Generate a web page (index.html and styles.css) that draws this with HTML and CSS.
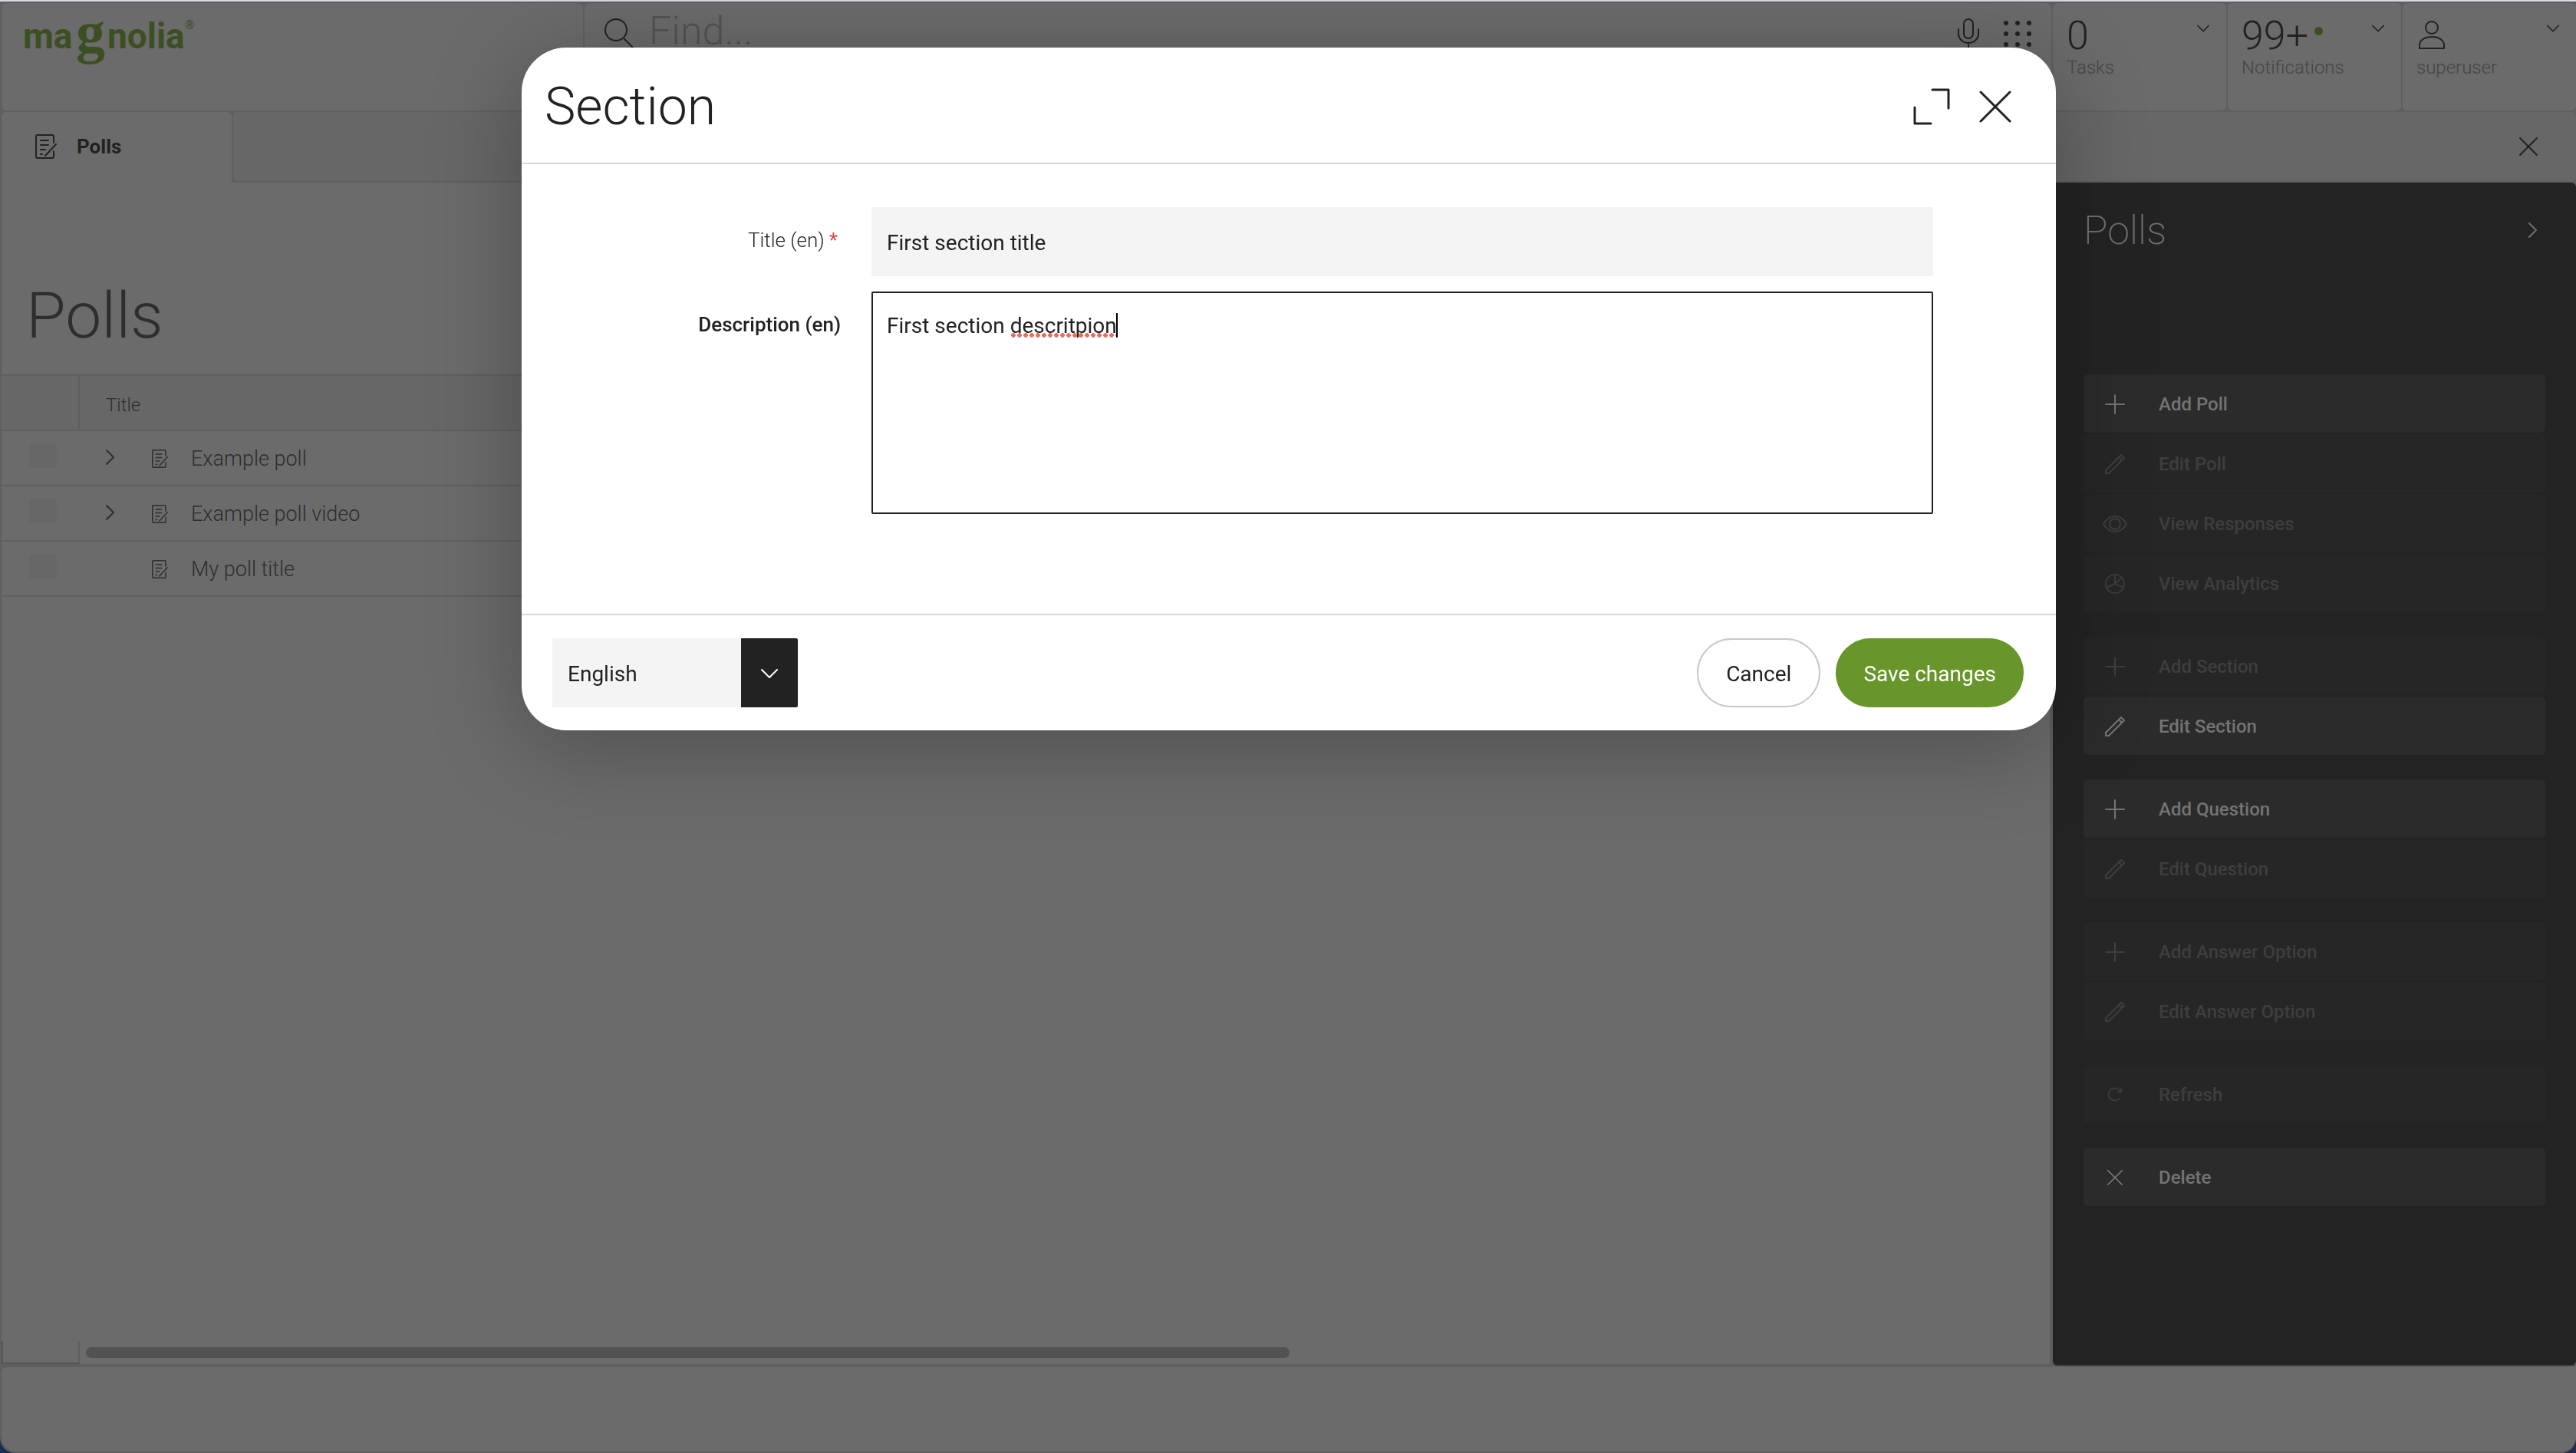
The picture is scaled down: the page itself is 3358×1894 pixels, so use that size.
FILE: index.html
```html
<!DOCTYPE html>
<html lang="en">
<head>
<meta charset="utf-8">
<title>Polls - Magnolia</title>
<link rel="stylesheet" href="styles.css">
</head>
<body>
<svg class="sprite" aria-hidden="true">
  <symbol id="doc" viewBox="0 0 28 32"><path d="M24 11V3a2 2 0 0 0-2-2H3a2 2 0 0 0-2 2v26a2 2 0 0 0 2 2h19a2 2 0 0 0 2-2v-7M7 8h10M7 14h10M7 20h6M7 26h2M27 13 13 28"/></symbol>
  <symbol id="close" viewBox="0 0 24 24"><path d="M1 1l22 22M23 1 1 23"/></symbol>
  <symbol id="down" viewBox="0 0 22 12"><path d="M1 1l10 10L21 1"/></symbol>
  <symbol id="right" viewBox="0 0 12 20"><path d="M1 1l9 9-9 9"/></symbol>
  <symbol id="plus" viewBox="0 0 26 26"><path d="M13 1v24M1 13h24"/></symbol>
  <symbol id="pencil" viewBox="0 0 26 26"><path d="M1 25v-4L19 3l2-2 4 4-2 2L5 25zM18 4l4 4"/></symbol>
  <symbol id="eye" viewBox="0 0 32 24"><path d="M1 12C5 5 10 2 16 2s11 3 15 10c-4 7-9 10-15 10S5 19 1 12z"/><circle cx="16" cy="12" r="7"/></symbol>
  <symbol id="pie" viewBox="0 0 28 28"><circle cx="14" cy="14" r="13"/><path d="M14 1v13l9-8M14 14 3 19M14 14l11 5"/></symbol>
  <symbol id="refresh" viewBox="0 0 22 22"><path d="M17 17a9 9 0 1 1 1-12l2 2M20 2v5h-5"/></symbol>
</svg>

<header class="topbar">
  <div class="cell brand">
    <a href="#" aria-label="magnolia">
      <svg class="logo" width="230" height="68" viewBox="0 0 230 68">
        <text class="logo-sans" x="-2" y="43">ma</text>
        <text class="logo-serif" x="67" y="48">g</text>
        <text class="logo-sans" x="108" y="43">nolia</text>
        <text class="logo-mark" x="209" y="18">®</text>
      </svg>
    </a>
  </div>
  <div class="cell search">
    <svg class="icon" width="38" height="40" viewBox="0 0 38 40"><circle cx="15" cy="15" r="14"/><path d="M26 27l11 11"/></svg>
    <input class="search-input" type="text" placeholder="Find..." aria-label="Find">
    <svg class="icon" width="28" height="44" viewBox="0 0 28 44"><rect x="8" y="1" width="12" height="25" rx="6"/><path d="M1 14v6a13 12 0 0 0 26 0v-6M14 32v10"/></svg>
    <svg class="dots" width="36" height="36" viewBox="0 0 36 36"><circle cx="3" cy="4" r="3"/><circle cx="18" cy="4" r="3"/><circle cx="33" cy="4" r="3"/><circle cx="3" cy="18" r="3"/><circle cx="18" cy="18" r="3"/><circle cx="33" cy="18" r="3"/><circle cx="3" cy="32" r="3"/><circle cx="18" cy="32" r="3"/><circle cx="33" cy="32" r="3"/></svg>
  </div>
  <button class="cell stat" type="button">
    <span class="stat-value">0</span><svg class="icon stat-arrow"><use href="#down"/></svg>
    <span class="stat-name">Tasks</span>
  </button>
  <button class="cell stat" type="button">
    <span class="stat-value">99+<i class="unread"></i></span><svg class="icon stat-arrow"><use href="#down"/></svg>
    <span class="stat-name">Notifications</span>
  </button>
  <button class="cell stat" type="button">
    <span class="stat-value"><svg class="icon user-icon" width="36" height="38" viewBox="0 0 36 38"><ellipse cx="18" cy="9" rx="8" ry="8"/><path d="M2 36v-4c0-6 6-11 16-11s16 5 16 11v4z"/></svg></span><svg class="icon stat-arrow"><use href="#down"/></svg>
    <span class="stat-name">superuser</span>
  </button>
</header>

<nav class="tabs">
  <a class="tab" href="#"><svg class="icon" width="28" height="32"><use href="#doc"/></svg>Polls</a>
  <div class="tab-rest"><button class="plain" type="button" aria-label="Close app"><svg class="icon" width="24" height="24"><use href="#close"/></svg></button></div>
</nav>

<main class="main">
  <section class="browser">
    <h1 class="title">Polls</h1>
    <table class="polls">
      <colgroup><col class="col-check"><col></colgroup>
      <thead><tr><th></th><th>Title</th></tr></thead>
      <tbody>
        <tr><td><input class="check" type="checkbox" aria-label="Example poll"></td><td><div class="node"><svg class="icon caret-icon"><use href="#right"/></svg><svg class="icon node-icon"><use href="#doc"/></svg>Example poll</div></td></tr>
        <tr><td><input class="check" type="checkbox" aria-label="Example poll video"></td><td><div class="node"><svg class="icon caret-icon"><use href="#right"/></svg><svg class="icon node-icon"><use href="#doc"/></svg>Example poll video</div></td></tr>
        <tr><td><input class="check" type="checkbox" aria-label="My poll title"></td><td><div class="node"><span class="caret-icon"></span><svg class="icon node-icon"><use href="#doc"/></svg>My poll title</div></td></tr>
      </tbody>
    </table>
    <div class="scroll-row"><div class="scroll-corner"></div><div class="scroll-track"><div class="scroll-thumb"></div></div></div>
  </section>

  <aside class="actions">
    <div class="actions-head"><h2 class="actions-title">Polls</h2><button class="plain" type="button" aria-label="Collapse"><svg class="icon caret-icon"><use href="#right"/></svg></button></div>
    <div class="group">
      <button class="action" type="button"><svg class="icon"><use href="#plus"/></svg>Add Poll</button>
      <button class="action" type="button" disabled><svg class="icon"><use href="#pencil"/></svg>Edit Poll</button>
      <button class="action" type="button" disabled><svg class="icon wide-icon"><use href="#eye"/></svg>View Responses</button>
      <button class="action" type="button" disabled><svg class="icon"><use href="#pie"/></svg>View Analytics</button>
    </div>
    <div class="group">
      <button class="action" type="button" disabled><svg class="icon"><use href="#plus"/></svg>Add Section</button>
      <button class="action" type="button"><svg class="icon"><use href="#pencil"/></svg>Edit Section</button>
    </div>
    <div class="group">
      <button class="action" type="button"><svg class="icon"><use href="#plus"/></svg>Add Question</button>
      <button class="action" type="button" disabled><svg class="icon"><use href="#pencil"/></svg>Edit Question</button>
    </div>
    <div class="group">
      <button class="action" type="button" disabled><svg class="icon"><use href="#plus"/></svg>Add Answer Option</button>
      <button class="action" type="button" disabled><svg class="icon"><use href="#pencil"/></svg>Edit Answer Option</button>
    </div>
    <div class="group">
      <button class="action" type="button" disabled><svg class="icon small-icon"><use href="#refresh"/></svg>Refresh</button>
    </div>
    <div class="group">
      <button class="action" type="button"><svg class="icon small-icon"><use href="#close"/></svg>Delete</button>
    </div>
  </aside>
</main>
<footer class="status"></footer>

<div class="overlay">
  <form class="dialog" role="dialog" aria-labelledby="dialog-title">
    <header class="dialog-head">
      <h2 class="dialog-title" id="dialog-title">Section</h2>
      <button class="plain" type="button" aria-label="Maximize"><svg class="icon thick" width="48" height="48" viewBox="0 0 48 48"><path d="M25 2h21v24M2 25v21h21"/></svg></button>
      <button class="plain" type="button" aria-label="Close"><svg class="icon thick" width="42" height="42" viewBox="0 0 42 42"><path d="M2 2l38 38M40 2 2 40"/></svg></button>
    </header>
    <div class="dialog-body">
      <label class="label" for="f-title">Title (en)<span class="required">*</span></label>
      <input class="field" id="f-title" type="text" value="First section title">
      <label class="label label-active" for="f-desc">Description (en)</label>
      <div class="area-wrap">
        <textarea class="field area" id="f-desc" spellcheck="false">First section descritpion</textarea>
        <span class="misspelt"></span><span class="caret"></span>
      </div>
    </div>
    <footer class="dialog-foot">
      <div class="select-wrap">
        <select class="select" aria-label="Language"><option>English</option></select>
        <svg class="icon select-arrow" width="22" height="12"><use href="#down"/></svg>
      </div>
      <button class="btn btn-plain" type="button">Cancel</button>
      <button class="btn btn-primary" type="submit">Save changes</button>
    </footer>
  </form>
</div>
</body>
</html>
```
FILE: styles.css
```css
:root {
  --page: #6b6b6b;
  --page-alt: #676767;
  --line: #5f5f5f;
  --ink: #222;
  --ink-soft: #2e2e2e;
  --panel: #232323;
}

* { box-sizing: border-box; }

html { background: linear-gradient(90deg, #16304f, #2b2a4d); }

body {
  margin: 0;
  min-height: 100vh;
  display: flex;
  flex-direction: column;
  background: var(--line);
  border-top: 2px solid #d8d9e0;
  border-radius: 0 0 20px 20px;
  padding: 2px 0 0 2px;
  font-family: Roboto, "Liberation Sans", sans-serif;
  font-size: 28px;
  color: var(--ink);
}

button, input, select, textarea { font: inherit; color: inherit; border-radius: 0; }
a { color: inherit; text-decoration: none; }
.sprite { display: none; }

.icon { fill: none; stroke: currentColor; stroke-width: 2; stroke-linecap: round; stroke-linejoin: round; flex: none; }
.thick { stroke-width: 3; }
.plain { border: 0; padding: 0; background: none; display: flex; }

/* Top bar */
.topbar {
  display: grid;
  grid-template-columns: 758px 1fr 226px 226px 226px;
  gap: 2px;
  height: 140px;
}
.cell { background: var(--page); border: 0; border-radius: 6px; }
.brand { padding: 16px 30px; }
.logo { display: block; overflow: visible; fill: #3c4f22; }
.logo-sans { font: 700 46px Roboto, sans-serif; }
.logo-serif { font: 700 76px "Liberation Serif", serif; }
.logo-mark { font: 500 16px Roboto, sans-serif; }

.search { display: flex; align-items: flex-start; padding: 16px 26px 0 26px; }
.search-input {
  flex: 1;
  min-width: 0;
  height: 60px;
  margin: -10px 0 0 20px;
  padding: 0;
  border: 0;
  background: none;
  font-size: 52px;
  font-weight: 300;
}
.search-input::placeholder { color: #535353; opacity: 1; }
.dots { fill: var(--ink); margin: 6px 0 0 32px; }
.search .icon { margin-top: 4px; }

.stat {
  display: grid;
  grid-template-columns: 1fr auto;
  align-content: start;
  padding: 14px 22px 0 18px;
  text-align: left;
}
.stat-value { display: flex; align-items: center; height: 56px; font-size: 52px; font-weight: 300; }
.stat-arrow { width: 16px; height: 10px; margin-top: 14px; }
.stat-name { font-size: 24px; line-height: 28px; font-weight: 300; color: #464646; }
.unread { width: 11px; height: 11px; border-radius: 50%; background: #3c4f22; margin: -12px 0 0 8px; }
.user-icon { margin-left: 2px; }

/* Tabs */
.tabs { display: flex; gap: 2px; margin-top: 2px; height: 92px; }
.tab {
  width: 300px;
  display: flex;
  align-items: center;
  gap: 26px;
  padding: 0 44px 2px;
  background: var(--page);
  border-radius: 6px 6px 0 0;
  font-weight: 700;
  font-size: 26px;
}
.tab-rest {
  flex: 1;
  display: flex;
  align-items: center;
  justify-content: flex-end;
  margin-bottom: 2px;
  padding-right: 50px;
  background: var(--page-alt);
  border-radius: 6px;
}

/* Main */
.main { flex: 1; display: flex; gap: 4px; }
.browser { flex: 1; display: flex; flex-direction: column; background: var(--page); border-bottom: 2px solid var(--line); }
.title { margin: 0; height: 252px; padding: 116px 0 0 32px; font-size: 84px; line-height: 116px; font-weight: 300; color: var(--ink-soft); border-bottom: 2px solid var(--line); }

.polls { width: 100%; table-layout: fixed; border-collapse: separate; border-spacing: 0; color: var(--ink-soft); }
.col-check { width: 102px; }
.polls th, .polls td { height: 72px; padding: 0 34px; border-bottom: 2px solid var(--line); text-align: left; font-weight: 300; font-size: 27px; }
.polls th { padding-top: 6px; background: var(--page-alt); font-size: 24px; font-weight: 300; }
.polls th:first-child { border-right: 2px solid var(--line); }
.check { appearance: none; display: block; width: 36px; height: 32px; margin: 0 0 6px 2px; background: var(--page-alt); border-radius: 2px; }
.node { display: flex; align-items: center; padding-top: 2px; }
.caret-icon { width: 12px; height: 20px; }
.node .caret-icon { margin-bottom: 4px; }
.node-icon { width: 21px; height: 24px; margin: 0 30px 0 48px; }

.scroll-row { display: flex; margin-top: auto; height: 30px; }
.scroll-corner { width: 102px; border: 2px solid #565656; border-top: 0; border-right-color: var(--line); }
.scroll-track { flex: 1; padding: 8px; }
.scroll-thumb { width: 61.5%; height: 14px; border-radius: 7px; background: #525252; }

/* Action panel */
.actions { width: 682px; background: var(--panel); border-radius: 0 6px 6px 6px; padding: 0 40px; color: #6f6f6f; }
.actions-head { display: flex; align-items: center; justify-content: space-between; height: 124px; padding: 0 10px 0 0; margin-bottom: 126px; }
.actions-title { margin: 0; font-size: 52px; font-weight: 200; }
.group { display: grid; gap: 2px; margin-bottom: 32px; }
.action {
  display: grid;
  grid-template-columns: 26px auto;
  align-items: center;
  justify-content: start;
  justify-items: center;
  gap: 44px;
  height: 76px;
  padding: 2px 28px 0;
  border: 0;
  border-radius: 6px;
  background: #2b2b2b;
  color: #747474;
  font-size: 24px;
  font-weight: 500;
}
.action:disabled { background: #262626; color: #3e3e3e; }
.action .icon { width: 26px; height: 26px; }
.action .wide-icon { width: 32px; height: 24px; }
.action .small-icon { width: 20px; height: 20px; }

.status { height: 114px; background: var(--page); border-bottom: 2px solid var(--line); border-top: 2px solid var(--line); border-radius: 8px 0 20px 20px; }

/* Dialog */
.overlay { position: fixed; inset: 0; display: flex; justify-content: center; align-items: flex-start; padding: 62px 0 0 2px; }
.dialog {
  width: 100%;
  max-width: 2000px;
  background: #fff;
  border-radius: 58px;
  box-shadow: 0 20px 120px rgba(0, 0, 0, .28);
}
.dialog-head { display: flex; align-items: center; gap: 38px; height: 152px; padding: 4px 58px 0 30px; border-bottom: 2px solid #d9d9d9; }
.dialog-title { margin: 0; flex: 1; font-size: 68px; font-weight: 300; }
.dialog-body { display: grid; grid-template-columns: 416px 1fr; column-gap: 40px; row-gap: 20px; padding: 56px 160px 130px 0; }
.label { text-align: right; font-size: 26px; line-height: 30px; padding-top: 28px; font-weight: 300; }
.label-active { font-weight: 500; }
.required { color: #e0483e; font-weight: 400; margin: 0 4px 0 6px; }
.field { display: block; width: 100%; height: 90px; padding: 2px 20px 0; border: 0; border-radius: 2px; background: #f4f4f4; outline: none; }
.area-wrap { position: relative; }
.area { height: 290px; padding: 26px 18px; border: 2px solid var(--ink); background: #fff; resize: none; line-height: 34px; }
.misspelt { position: absolute; left: 181px; top: 54px; width: 138px; height: 6px; background: radial-gradient(circle 3px, #ee6a60 90%, transparent) 0 0 / 8px 6px; }
.caret { position: absolute; left: 319px; top: 28px; width: 2px; height: 32px; background: #000; }
.dialog-foot { display: flex; align-items: center; gap: 20px; padding: 30px 42px 30px 40px; border-top: 2px solid #d9d9d9; }
.select-wrap { position: relative; margin-right: auto; }
.select { appearance: none; display: block; width: 320px; height: 90px; padding: 2px 20px 0; border: 0; border-right: 74px solid var(--ink); border-radius: 2px; background: #f4f4f4; }
.select-arrow { position: absolute; right: 26px; top: 40px; color: #fff; pointer-events: none; }
.btn { height: 90px; padding: 2px 36px 0; border: 0; border-radius: 45px; }
.btn-plain { border: 2px solid #c8c8c8; background: #fff; }
.btn-primary { background: #68962a; color: #fff; }
```
